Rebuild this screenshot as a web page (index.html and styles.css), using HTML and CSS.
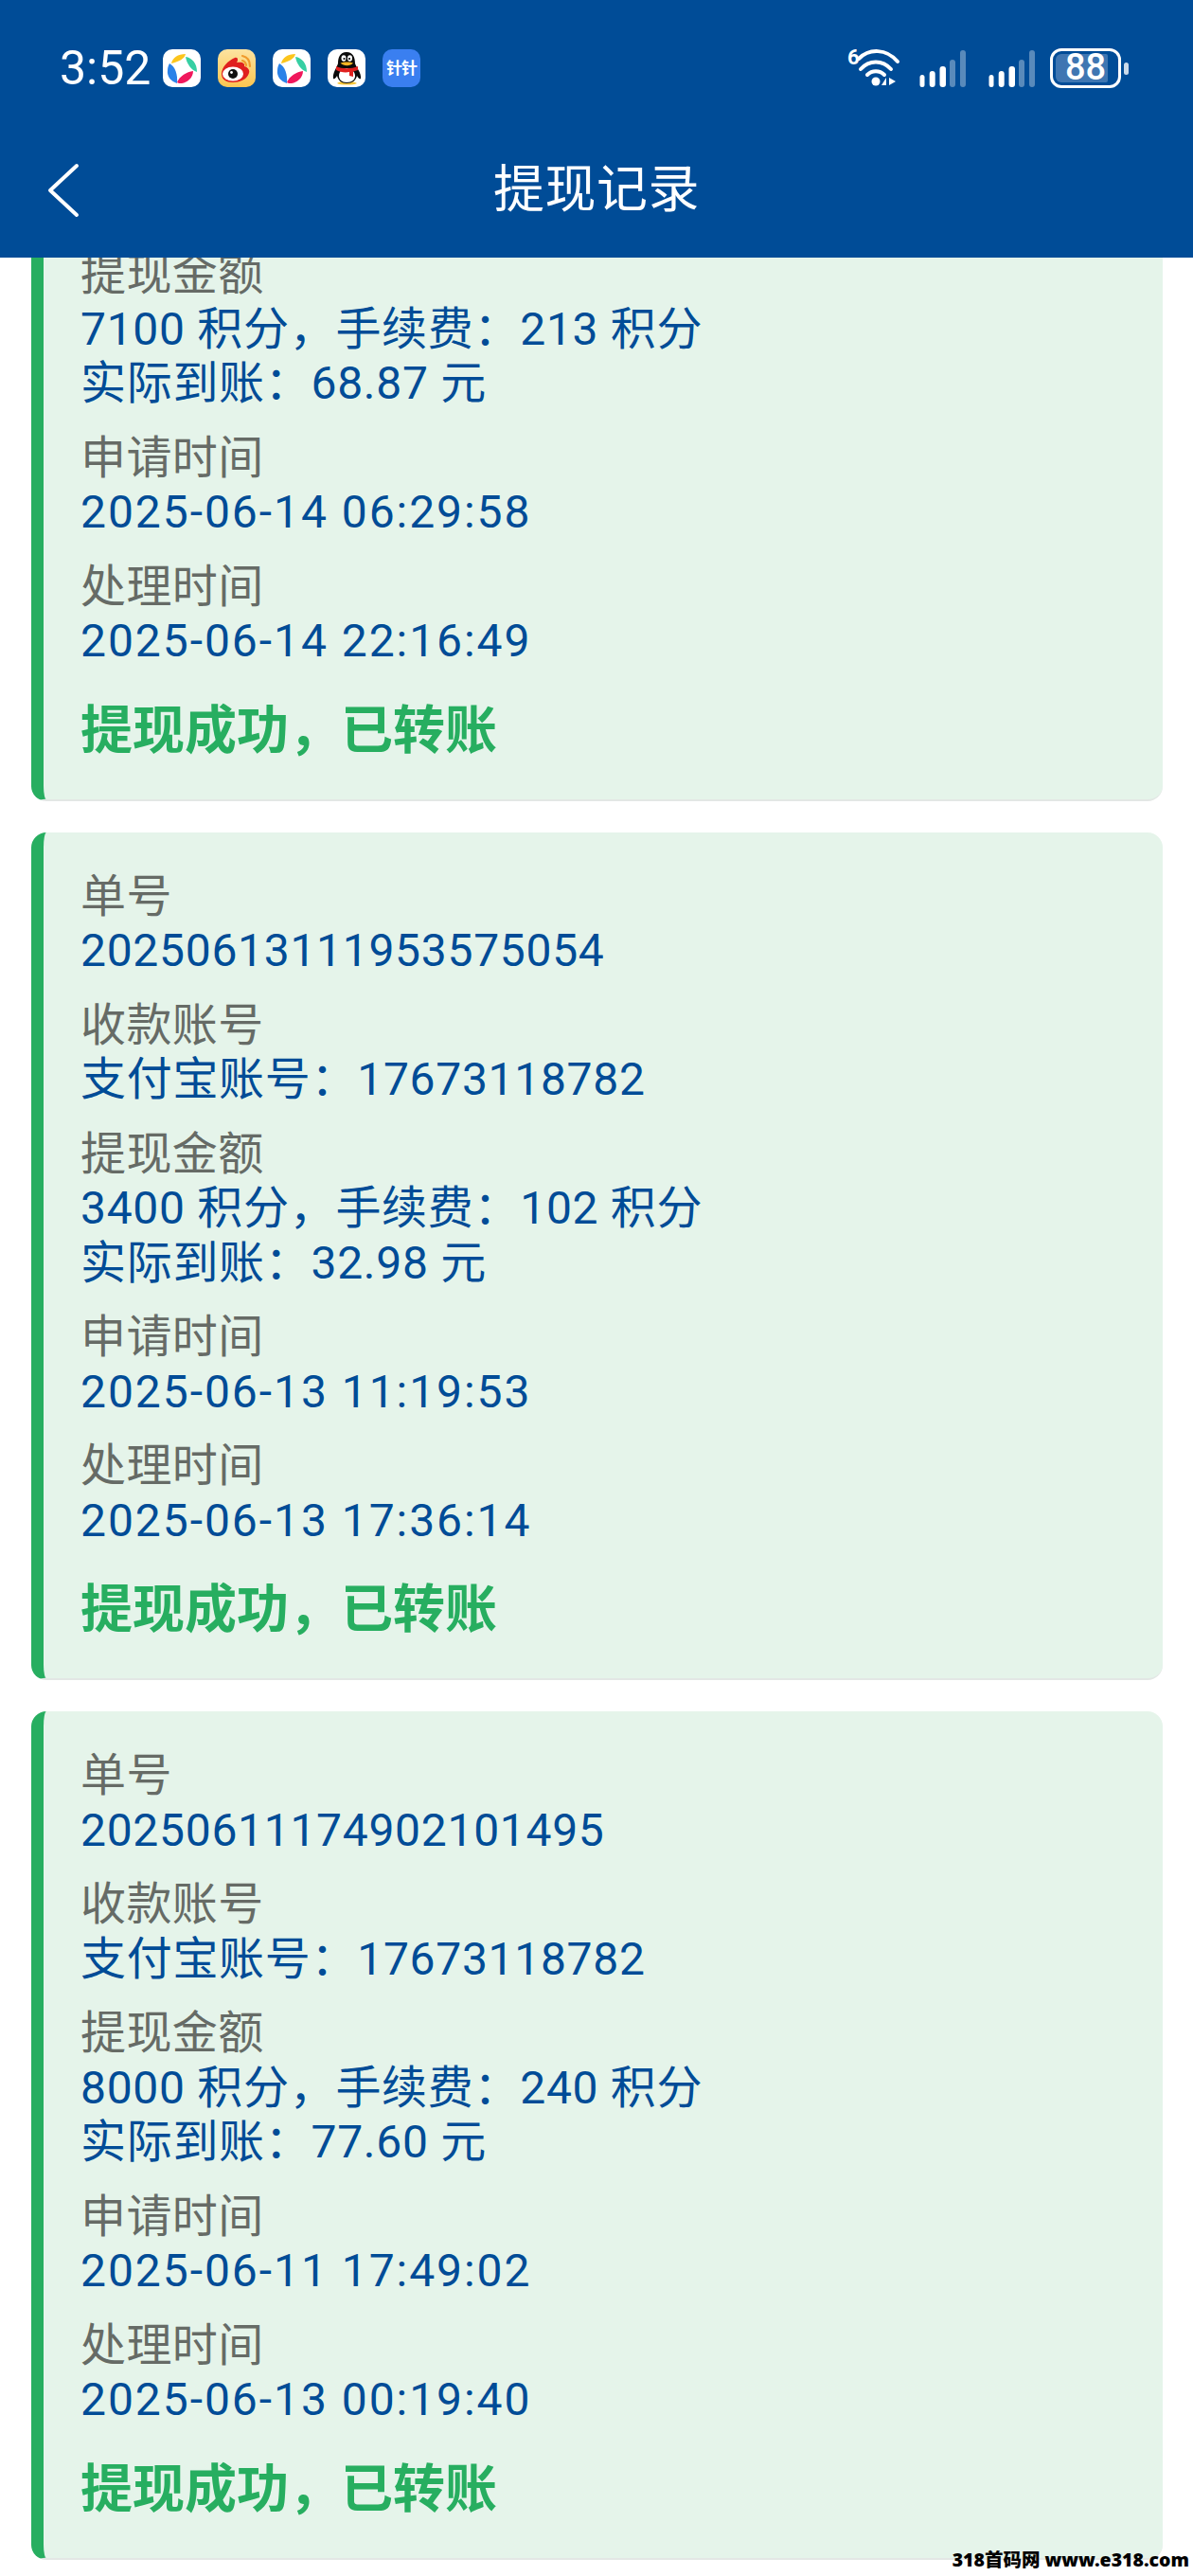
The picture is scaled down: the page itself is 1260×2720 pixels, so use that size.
FILE: index.html
```html
<!DOCTYPE html>
<html lang="zh-CN">
<head>
    <meta charset="UTF-8">
    <meta name="viewport" content="width=device-width, initial-scale=1.0">
    <title>提现记录</title>
    <link rel="stylesheet" href="styles.css">
</head>
<body>
    <svg class="defs" width="0" height="0">
        <symbol id="petals" viewBox="0 0 40 40">
            <path fill="#fcc51d" d="M9 15C10 9 16 5 24 5 23 10 17 13 9 15Z"/>
            <path fill="#36cfa3" d="M24 8C31 9 36 15 36 24 30 22 25 15 24 8Z"/>
            <path fill="#2b82e8" d="M7 15C13 18 16 27 15 36 9 34 4 29 5 22 5 19 6 17 7 15Z"/>
            <path fill="#f0185c" d="M15 35C18 28 25 24 32 23 32 30 26 35 20 36 18 36 16 36 15 35Z"/>
        </symbol>
        <symbol id="bars" viewBox="0 0 50 40">
            <rect x="1.500" y="26" width="5" height="13" rx="2.500" fill="#fff"/>
            <rect x="11.700" y="22" width="6" height="17" rx="3" fill="#fff"/>
            <rect x="22.500" y="17" width="6.500" height="22" rx="3" fill="#fff"/>
            <rect x="33" y="10" width="6" height="29" rx="3" fill="#fff" fill-opacity=".35"/>
            <rect x="44" y="0" width="6" height="39" rx="3" fill="#fff" fill-opacity=".35"/>
        </symbol>
    </svg>

    <div class="top">
        <div class="status-bar">
            <span class="time">3:52</span>
            <div class="app-icons">
                <svg class="app-icon white"><use href="#petals"/></svg>
                <svg class="app-icon" viewBox="0 0 40 40">
                    <defs>
                        <linearGradient id="wbBg" x1="0" y1="0" x2="0" y2="1">
                            <stop offset="0" stop-color="#fde3a0"/>
                            <stop offset="1" stop-color="#fbc550"/>
                        </linearGradient>
                    </defs>
                    <rect width="40" height="40" fill="url(#wbBg)"/>
                    <path fill="none" stroke="#f09a2c" stroke-width="2.200" stroke-linecap="round" d="M26 7C31 8 34 12 34 18M26 12C28.500 12.500 29.500 14 30 17"/>
                    <path fill="#e0201f" d="M4 26C4 19 11 12 18 9 21 8 22 11 20 14 25 13 29 14 28 18 32 19 34 22 33 25 31 32 23 35 16 35 9 35 4 32 4 26Z"/>
                    <ellipse cx="16" cy="26" rx="11" ry="7.500" fill="#fff"/>
                    <circle cx="16" cy="26" r="5" fill="#111"/>
                    <circle cx="14.500" cy="24.500" r="1.400" fill="#fff"/>
                </svg>
                <svg class="app-icon white"><use href="#petals"/></svg>
                <svg class="app-icon white" viewBox="0 0 40 40">
                    <path fill="#f7c63a" d="M10 36C13 33 27 33 31 36 27 38 14 38 10 36Z"/>
                    <path fill="#0b0b0b" d="M20 3C13 3 11 9 11 15 10 19 5 25 6 31 7 32 9 30 10 28 11 33 15 36 20 36 26 36 30 33 31 28 32 30 34 32 35 31 36 25 30 19 29 15 29 9 27 3 20 3Z"/>
                    <path fill="#fff" d="M20 20C15 20 12 24 12 28 12 32 15 35 20 35 26 35 29 32 29 28 29 24 25 20 20 20Z"/>
                    <ellipse cx="17" cy="9.500" rx="2.500" ry="3.200" fill="#fff"/>
                    <ellipse cx="23.500" cy="9.500" rx="2.500" ry="3.200" fill="#fff"/>
                    <circle cx="17.500" cy="10" r="1.100"/>
                    <circle cx="23" cy="10" r="1.100"/>
                    <path fill="#f5b423" d="M13.500 14.500C17 13 24 13 27 14.500 24 18 17 18 13.500 14.500Z"/>
                    <path fill="#e0201f" d="M9 18C15 21 25 21 32 18L32 22 27 23.500 27 29 23 28 23 24C18 25 13 24 9 22Z"/>
                </svg>
                <span class="app-icon pin">针针</span>
            </div>
            <div class="sys-icons">
                <div class="wifi">
                    <span class="wifi-six">6</span>
                    <svg width="52" height="42" viewBox="0 0 52 42">
                        <path fill="none" stroke="#fff" stroke-width="4" stroke-linecap="round" d="M7 11C18 0 36 0 48 14"/>
                        <path fill="none" stroke="#fff" stroke-width="4" stroke-linecap="round" d="M9 22C18 12 32 12 41 22"/>
                        <path fill="none" stroke="#fff" stroke-width="4" stroke-linecap="round" d="M16 28C21 23 29 23 34 28"/>
                        <circle cx="25" cy="35" r="4.500" fill="#fff"/>
                        <path fill="#fff" d="M36 31V39H31ZM39 31 46 35 39 39Z"/>
                    </svg>
                </div>
                <svg class="signal"><use href="#bars"/></svg>
                <svg class="signal"><use href="#bars"/></svg>
                <div class="battery">
                    <div class="battery-body">
                        <div class="battery-fill"></div>
                        <span class="battery-num">88</span>
                    </div>
                    <div class="battery-nub"></div>
                </div>
            </div>
        </div>
        <div class="title-bar">
            <svg class="back" width="36" height="58" viewBox="0 0 36 58">
                <path fill="none" stroke="#fff" stroke-width="4" stroke-linecap="round" stroke-linejoin="round" d="M32 3 4 29 32 55"/>
            </svg>
            <h1>提现记录</h1>
        </div>
    </div>

    <div class="list">
        <div class="card card-cut">
            <div class="row">
                <div class="label">提现金额</div>
                <div class="value">7100 积分，手续费：213 积分</div>
                <div class="value">实际到账：68.87 元</div>
            </div>
            <div class="row">
                <div class="label">申请时间</div>
                <div class="value date">2025-06-14 06:29:58</div>
            </div>
            <div class="row">
                <div class="label">处理时间</div>
                <div class="value date">2025-06-14 22:16:49</div>
            </div>
            <div class="state">提现成功，已转账</div>
        </div>

        <div class="card">
            <div class="row">
                <div class="label">单号</div>
                <div class="value">20250613111953575054</div>
            </div>
            <div class="row">
                <div class="label">收款账号</div>
                <div class="value">支付宝账号：17673118782</div>
            </div>
            <div class="row">
                <div class="label">提现金额</div>
                <div class="value">3400 积分，手续费：102 积分</div>
                <div class="value">实际到账：32.98 元</div>
            </div>
            <div class="row">
                <div class="label">申请时间</div>
                <div class="value date">2025-06-13 11:19:53</div>
            </div>
            <div class="row">
                <div class="label">处理时间</div>
                <div class="value date">2025-06-13 17:36:14</div>
            </div>
            <div class="state">提现成功，已转账</div>
        </div>

        <div class="card">
            <div class="row">
                <div class="label">单号</div>
                <div class="value">20250611174902101495</div>
            </div>
            <div class="row">
                <div class="label">收款账号</div>
                <div class="value">支付宝账号：17673118782</div>
            </div>
            <div class="row">
                <div class="label">提现金额</div>
                <div class="value">8000 积分，手续费：240 积分</div>
                <div class="value">实际到账：77.60 元</div>
            </div>
            <div class="row">
                <div class="label">申请时间</div>
                <div class="value date">2025-06-11 17:49:02</div>
            </div>
            <div class="row">
                <div class="label">处理时间</div>
                <div class="value date">2025-06-13 00:19:40</div>
            </div>
            <div class="state">提现成功，已转账</div>
        </div>
    </div>

    <div class="watermark">318首码网 www.e318.com</div>
</body>
</html>
```

FILE: styles.css
```css
* {
    margin: 0;
    padding: 0;
    box-sizing: border-box;
}

html, body {
    height: 2720px;
    overflow: hidden;
}

body {
    position: relative;
    background: #fff;
    font-family: Roboto, "Noto Sans CJK SC", sans-serif;
}

.defs {
    position: absolute;
}

.top {
    position: relative;
    z-index: 2;
    height: 272px;
    background: #004c97;
    color: #fff;
}

.status-bar {
    height: 144px;
    padding: 52px 68px 0 63px;
    display: flex;
    align-items: flex-start;
}

.time {
    font-size: 50px;
    line-height: 40px;
    width: 109px;
}

.app-icons {
    display: flex;
    gap: 18px;
}

.app-icon {
    display: block;
    width: 40px;
    height: 40px;
    border-radius: 10px;
    overflow: hidden;
}

.app-icon.white {
    background: #fff;
}

.pin {
    background: #3a7ff0;
    color: #fff;
    font-size: 17px;
    font-weight: 700;
    line-height: 40px;
    text-align: center;
    letter-spacing: -1px;
}

.sys-icons {
    margin-left: auto;
    display: flex;
    align-items: flex-start;
    margin-top: -1px;
}

.wifi {
    position: relative;
    width: 58px;
    height: 42px;
    padding-left: 6px;
    margin-right: 18px;
}

.wifi-six {
    position: absolute;
    left: 1px;
    top: -1px;
    font-size: 22px;
    font-weight: 700;
    line-height: 22px;
}

.wifi svg {
    overflow: visible;
}

.signal {
    width: 50px;
    height: 40px;
    margin-top: 2px;
    margin-right: 23px;
}

.signal:last-of-type {
    margin-right: 16px;
}

.battery {
    display: flex;
    align-items: center;
    gap: 3px;
}

.battery-body {
    position: relative;
    width: 75px;
    height: 42px;
    border: 3.5px solid #fff;
    border-radius: 12px;
    padding: 3px;
    text-align: center;
}

.battery-fill {
    height: 100%;
    width: 88%;
    background: #3f76b2;
    border-radius: 6px 2px 2px 6px;
}

.battery-num {
    position: absolute;
    left: 0;
    right: 0;
    top: 0;
    font-size: 38px;
    font-weight: 500;
    line-height: 35px;
}

.battery-nub {
    width: 5px;
    height: 13px;
    border-radius: 3px;
    background: #fff;
    opacity: .8;
}

.title-bar {
    position: relative;
    height: 128px;
    padding-bottom: 14px;
    display: flex;
    align-items: center;
    justify-content: center;
}

.title-bar h1 {
    font-size: 54px;
    font-weight: 400;
    line-height: 60px;
    letter-spacing: .5px;
}

.back {
    position: absolute;
    left: 49px;
    top: 28px;
}

.list {
    padding: 0 32px 0 33px;
}

.card {
    background: #e5f4ea;
    border-left: 13px solid #27ae60;
    border-bottom: 2px solid #e3e7e5;
    border-radius: 16px;
    padding: 39px 40px 42px 39px;
    margin-bottom: 33px;
}

.card-cut {
    padding-top: 0;
    margin-top: -11px;
    border-top-left-radius: 0;
    border-top-right-radius: 0;
}

.row {
    margin-bottom: 21px;
}

.label,
.value {
    font-size: 48px;
    line-height: 57.5px;
    letter-spacing: .4px;
}

.label {
    color: #666b66;
}

.value {
    color: #004c97;
    letter-spacing: .7px;
}

.value.date {
    letter-spacing: 1.95px;
}

.state {
    font-size: 55px;
    font-weight: 700;
    line-height: 62px;
    color: #27ae60;
    margin-top: 34px;
}

.watermark {
    position: absolute;
    right: 4px;
    bottom: 4px;
    z-index: 3;
    font-family: "Noto Sans", "Noto Sans CJK SC", sans-serif;
    font-size: 19.5px;
    font-weight: 900;
    line-height: 26px;
    color: #000;
}
```
